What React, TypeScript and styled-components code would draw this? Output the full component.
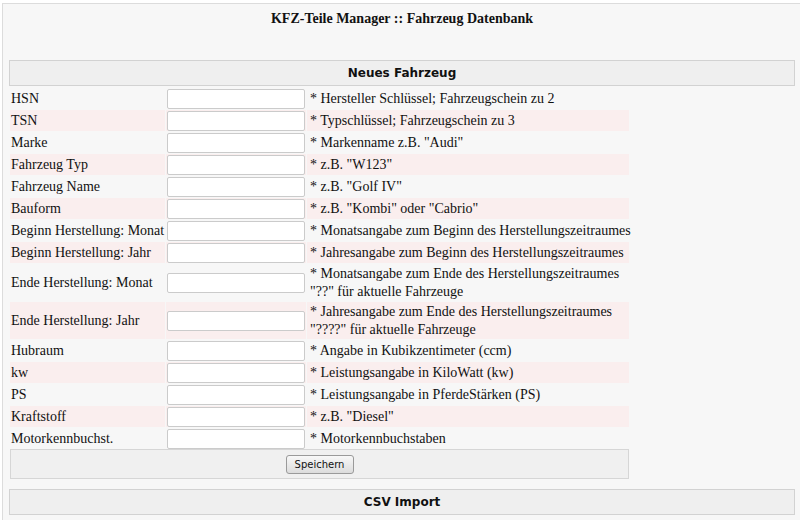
import * as React from "react";
import styled, { createGlobalStyle } from "styled-components";

const GlobalStyle = createGlobalStyle`
  html, body {
    margin: 0;
    padding: 0;
    background: #ffffff;
    overflow: hidden;
  }
  body {
    font-family: "Liberation Serif", "Times New Roman", serif;
    font-size: 14px;
    color: #111;
  }
`;

const Page = styled.div`
  margin: 3px 0 0 2px;
  padding: 0 5px 40px 6px;
  border-top: 1px solid #dcdcdc;
  border-left: 1px solid #dcdcdc;
  background: #f7f7f7;
  min-height: 560px;
`;

const Title = styled.h1`
  margin: 0;
  padding-top: 7px;
  font-size: 14px;
  line-height: 16px;
  font-weight: bold;
  text-align: center;
`;

const SectionHeader = styled.div<{ $top: number }>`
  margin-top: ${(p) => p.$top}px;
  height: 26px;
  box-sizing: border-box;
  border: 1px solid #d2d2d2;
  background: #efefef;
  font-family: "DejaVu Sans", Verdana, sans-serif;
  font-size: 12px;
  font-weight: bold;
  line-height: 24px;
  text-align: center;
  color: #111;
`;

const Form = styled.div`
  display: grid;
  grid-template-columns: 155px 140px 322px;
  column-gap: 1px;
  row-gap: 1px;
  margin: 2px 0 0 1px;
`;

const Cell = styled.div<{ $alt: boolean; $tall?: boolean }>`
  display: flex;
  align-items: center;
  min-height: ${(p) => (p.$tall ? 37 : 21)}px;
  background: ${(p) => (p.$alt ? "#faeeee" : "transparent")};
`;

const Label = styled(Cell)`
  padding-left: 1px;
  white-space: nowrap;
`;

const Hint = styled(Cell)`
  padding: 0 3px;
  line-height: 18px;
  white-space: nowrap;
`;

const Field = styled.input`
  display: block;
  box-sizing: border-box;
  width: 138px;
  height: 20px;
  margin: 0 1px;
  border: 1px solid #cbcbcb;
  border-radius: 2px;
  background: #fff;
  outline: none;
`;

const SaveBar = styled.div`
  display: flex;
  align-items: center;
  justify-content: center;
  box-sizing: border-box;
  width: 619px;
  height: 30px;
  margin: 0 0 0 1px;
  border: 1px solid #d6d6d6;
  background: #f0f0f0;
`;

const Button = styled.button`
  box-sizing: border-box;
  width: 68px;
  height: 19px;
  padding: 0;
  border: 1px solid #9a9a9a;
  border-radius: 3px;
  background: linear-gradient(#f8f8f8, #dcdcdc);
  font-family: "DejaVu Sans", Tahoma, sans-serif;
  font-size: 10px;
  color: #111;
`;

type Row = { label: string; hint: string[] };

const rows: Row[] = [
  { label: "HSN", hint: ["* Hersteller Schlüssel; Fahrzeugschein zu 2"] },
  { label: "TSN", hint: ["* Typschlüssel; Fahrzeugschein zu 3"] },
  { label: "Marke", hint: ['* Markenname z.B. "Audi"'] },
  { label: "Fahrzeug Typ", hint: ['* z.B. "W123"'] },
  { label: "Fahrzeug Name", hint: ['* z.B. "Golf IV"'] },
  { label: "Bauform", hint: ['* z.B. "Kombi" oder "Cabrio"'] },
  {
    label: "Beginn Herstellung: Monat",
    hint: ["* Monatsangabe zum Beginn des Herstellungszeitraumes"],
  },
  {
    label: "Beginn Herstellung: Jahr",
    hint: ["* Jahresangabe zum Beginn des Herstellungszeitraumes"],
  },
  {
    label: "Ende Herstellung: Monat",
    hint: [
      "* Monatsangabe zum Ende des Herstellungszeitraumes",
      '"??" für aktuelle Fahrzeuge',
    ],
  },
  {
    label: "Ende Herstellung: Jahr",
    hint: [
      "* Jahresangabe zum Ende des Herstellungszeitraumes",
      '"????" für aktuelle Fahrzeuge',
    ],
  },
  { label: "Hubraum", hint: ["* Angabe in Kubikzentimeter (ccm)"] },
  { label: "kw", hint: ["* Leistungsangabe in KiloWatt (kw)"] },
  { label: "PS", hint: ["* Leistungsangabe in PferdeStärken (PS)"] },
  { label: "Kraftstoff", hint: ['* z.B. "Diesel"'] },
  { label: "Motorkennbuchst.", hint: ["* Motorkennbuchstaben"] },
];

const App: React.FunctionComponent = () => {
  return (
    <>
      <GlobalStyle />
      <Page>
        <Title>KFZ-Teile Manager :: Fahrzeug Datenbank</Title>
        <SectionHeader $top={33}>Neues Fahrzeug</SectionHeader>
        <Form>
          {rows.map((row, i) => {
            const alt = i % 2 === 1;
            const tall = row.hint.length > 1;
            return (
              <React.Fragment key={row.label}>
                <Label $alt={alt} $tall={tall}>
                  {row.label}
                </Label>
                <Cell $alt={alt} $tall={tall}>
                  <Field type="text" />
                </Cell>
                <Hint $alt={alt} $tall={tall}>
                  <span>
                    {row.hint.map((line, j) => (
                      <React.Fragment key={j}>
                        {j > 0 && <br />}
                        {line}
                      </React.Fragment>
                    ))}
                  </span>
                </Hint>
              </React.Fragment>
            );
          })}
        </Form>
        <SaveBar>
          <Button type="button">Speichern</Button>
        </SaveBar>
        <SectionHeader $top={10}>CSV Import</SectionHeader>
      </Page>
    </>
  );
};

export default App;
